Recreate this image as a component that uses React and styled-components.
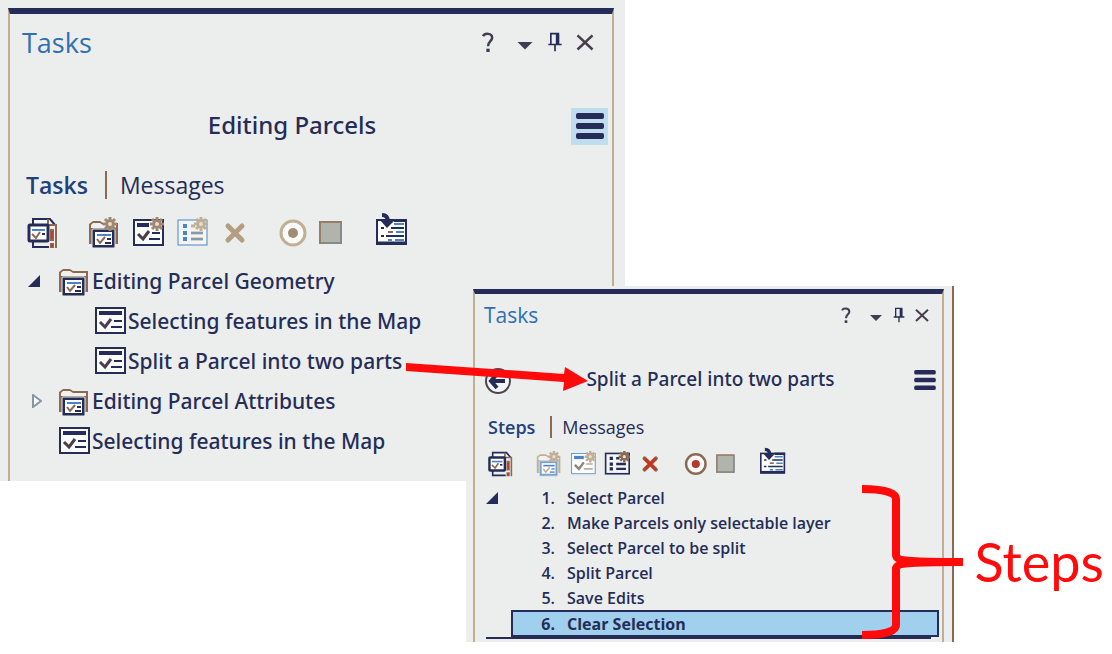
import React from "react";
import styled, { createGlobalStyle, css } from "styled-components";

const NAVY = "#252c57";
const BROWN = "#8a6a52";
const TAN = "#bfaf95";
const BLUE = "#4a86c5";
const SKY = "#a0d0ee";
const PANEL = "#ebeeed";
const RED = "#ff0b0b";

const GlobalStyle = createGlobalStyle`
  * { box-sizing: border-box; }
  body {
    margin: 0;
    background: #fff;
    color: ${NAVY};
    font-family: "Open Sans", "Noto Sans", sans-serif;
  }
  button {
    margin: 0;
    padding: 0;
    border: 0;
    background: none;
    color: inherit;
    font: inherit;
    cursor: pointer;
  }
  ul, ol, h1, h2 { margin: 0; padding: 0; font-weight: 400; list-style: none; }
  svg { display: block; flex: none; }
`;

const Stage = styled.main`
  display: grid;
  grid-template-columns: 466fr 159fr 329fr 158fr;
  grid-template-rows: 286px 195px auto;
`;

const Pane = styled.section`
  background: ${PANEL};
  ${(p) =>
    p.$compact
      ? css`
          grid-area: 2 / 2 / 4 / 4;
          padding: 3px 8px 0 7px;
          border-right: 2px solid ${BROWN};
        `
      : css`
          grid-area: 1 / 1 / 3 / 3;
          padding: 8px 11px 0 8px;
        `}
`;

const Frame = styled.div`
  height: 100%;
  border: 2px solid ${TAN};
  border-top: ${(p) => (p.$compact ? 5 : 6)}px solid ${NAVY};
  border-bottom: 0;
  padding-bottom: ${(p) => (p.$compact ? 3 : 19)}px;
`;

const TitleBar = styled.header`
  display: flex;
  align-items: center;
  justify-content: space-between;
  height: ${(p) => (p.$compact ? 42 : 56)}px;
  padding: ${(p) => (p.$compact ? "0 10px 0 9px" : "0 15px 0 12px")};
`;

const Title = styled.h1`
  color: #2f6fb2;
  font-size: ${(p) => (p.$compact ? 21 : 27)}px;
  line-height: 1;
`;

const WindowTools = styled.div`
  display: flex;
  gap: ${(p) => (p.$compact ? 3 : 6)}px;
`;

const WindowButton = styled.button`
  display: grid;
  place-items: center;
  width: ${(p) => (p.$compact ? 20 : 24)}px;
  height: 24px;
  &:first-child { margin-right: 7px; }
`;

const HeadingRow = styled.div`
  display: flex;
  align-items: center;
  height: ${(p) => (p.$compact ? 40 : 38)}px;
  margin-top: ${(p) => (p.$compact ? 24 : 37)}px;
  padding: ${(p) => (p.$compact ? "0 1px 0 9px" : "0 4px 0 3px")};
`;

const Heading = styled.h2`
  flex: 1;
  padding-bottom: 2px;
  text-align: center;
  font-family: "Noto Sans", "Open Sans", sans-serif;
  font-size: ${(p) => (p.$compact ? 19 : 24)}px;
  line-height: 1;
  font-weight: 500;
`;

const MenuButton = styled.button`
  display: grid;
  place-items: center;
  width: ${(p) => (p.$compact ? 32 : 37)}px;
  height: 37px;
  background: ${(p) => (p.$active ? "#bfddee" : "none")};
`;

const Tabs = styled.div`
  display: flex;
  align-items: center;
  height: 32px;
  margin-top: ${(p) => (p.$compact ? 11 : 24)}px;
  padding-left: ${(p) => (p.$compact ? 13 : 16)}px;
  font-size: ${(p) => (p.$compact ? 18 : 23)}px;
  line-height: 1;
`;

const Tab = styled.button`
  font-weight: ${(p) => (p.$active ? 600 : 400)};
  color: ${(p) => (p.$active ? "#22407a" : NAVY)};
  &:not(:first-child) {
    display: flex;
    align-items: center;
    height: ${(p) => (p.$compact ? 22 : 28)}px;
    margin-left: ${(p) => (p.$compact ? 15 : 17)}px;
    padding-left: ${(p) => (p.$compact ? 10 : 13)}px;
    border-left: 2px solid ${BROWN};
  }
`;

const Toolbar = styled.div`
  display: flex;
  gap: ${(p) => (p.$compact ? 18 : 24)}px;
  margin-top: ${(p) => (p.$compact ? 8 : 16)}px;
  padding-left: ${(p) => (p.$compact ? 12 : 16)}px;
`;

const ToolGroup = styled.div`
  display: flex;
  gap: ${(p) => p.$gap}px;
  &:first-child { margin-right: ${(p) => (p.$compact ? 5 : 6)}px; }
  &:last-child { margin-left: ${(p) => (p.$compact ? 4 : 6)}px; }
`;

const Tree = styled.ul`
  margin-top: 12px;
  padding-left: 16px;
  font-family: "Noto Sans", "Open Sans", sans-serif;
`;

const TreeRow = styled.li`
  display: flex;
  align-items: center;
  height: 40px;
  padding-left: ${(p) => (p.$nested ? 36 : 0)}px;
`;

const Toggle = styled.button`
  display: flex;
  width: 32px;
  padding-left: ${(p) => (p.$open ? 2 : 6)}px;
`;

const ToggleSpace = styled.span`
  width: 32px;
`;

const TreeItem = styled.button`
  display: flex;
  align-items: center;
  gap: 2px;
  font-size: 21px;
  line-height: 1;
  font-weight: 500;
  white-space: nowrap;
`;

const StepArea = styled.div`
  display: flex;
  align-items: flex-start;
  margin: 8px 11px 0;
  border-bottom: 2px solid ${NAVY};
`;

const StepToggle = styled.button`
  width: 25px;
  height: 25px;
`;

const StepList = styled.ol`
  flex: 1;
  margin-right: -8px;
`;

const Step = styled.li`
  display: flex;
  align-items: center;
  height: ${(p) => (p.$selected ? 27 : 25)}px;
  border: 2px solid ${(p) => (p.$selected ? NAVY : "transparent")};
  background: ${(p) => (p.$selected ? SKY : "none")};
  font-size: 16px;
  line-height: 1;
  font-weight: ${(p) => (p.$selected ? 700 : 600)};
`;

const StepNumber = styled.span`
  width: 42px;
  margin-right: 12px;
  text-align: right;
`;

const Arrow = styled.svg`
  grid-area: 2 / 1 / 3 / 3;
  z-index: 1;
  justify-self: end;
  margin: 76px 37px 0 0;
`;

const Callout = styled.aside`
  grid-area: 3 / 3 / 4 / 5;
  z-index: 1;
  place-self: end;
  display: flex;
  align-items: center;
  gap: 12px;
  margin: 0 8px 3px 0;
  color: ${RED};
  font-family: Lato, sans-serif;
  font-size: 54px;
  line-height: 1;
`;

const Gear = ({ color, x = 22, y = 7 }) => (
  <g transform={`translate(${x} ${y})`}>
    <g stroke={color} strokeWidth="3">
      <path d="M0-7V7M-7 0H7M-5-5L5 5M-5 5L5-5" />
    </g>
    <circle r="4.5" fill={color} />
    <circle r="2" fill="#e5ddcd" />
  </g>
);

const Icon = ({ size, children }) => (
  <svg width={size} height={size} viewBox="0 0 32 32" fill="none" aria-hidden="true">
    {children}
  </svg>
);

const PropertiesIcon = ({ size }) => (
  <Icon size={size}>
    <path d="M7 8V2H24L29 8" fill="#f6f7f7" stroke={NAVY} strokeWidth="2" />
    <path d="M7 23V30H23" stroke={NAVY} strokeWidth="2" />
    <path d="M22 2V8H30V31" stroke={BROWN} strokeWidth="2" />
    <rect x="3" y="8" width="19" height="16" rx="1" fill="#fff" stroke={NAVY} strokeWidth="3" />
    <path d="M6 13H19" stroke={BLUE} strokeWidth="2" />
    <path d="M6 17L10 21L14 15" stroke={BROWN} strokeWidth="2" />
    <path d="M16 17H19" stroke={NAVY} strokeWidth="2" />
    <path d="M26 12V24M26 26V31" stroke={BROWN} strokeWidth="4" />
    <path d="M26 14V22M26 27V30" stroke="#c23b28" strokeWidth="2" />
  </Icon>
);

const FolderIcon = ({ size, gear, faded }) => {
  const ink = faded ? "#7aa3cc" : NAVY;
  const edge = faded ? TAN : BROWN;
  return (
    <Icon size={size}>
      <path d="M1 27V7L5 4H12L15 6H30V27Z" fill={edge} />
      <path d="M3 8L5 6H12L15 8H28V11H3Z" fill="#f3f1ec" />
      <rect x="4" y="12" width="23" height="19" rx="1" fill={ink} stroke={PANEL} strokeWidth="1" />
      <rect x="7" y="15" width="17" height="13" fill="#fff" />
      <path d="M9 18H23" stroke={BLUE} strokeWidth="2" />
      <path d="M9 22L12 26L17 20" stroke={edge} strokeWidth="2" />
      <path d="M19 22H23M17 26H23" stroke={ink} strokeWidth="2" />
      {gear && <Gear color={faded ? TAN : "#a08770"} x={22} />}
    </Icon>
  );
};

const TaskIcon = ({ size, gear, faded }) => {
  const ink = faded ? BLUE : NAVY;
  const edge = faded ? TAN : BROWN;
  return (
    <Icon size={size}>
      <rect x="2" y="3" width="29" height="25" fill="#fafbfb" stroke={ink} strokeWidth={faded ? 1 : 2} />
      <path d={gear ? "M5 8H17" : "M5 8H28"} stroke={faded ? BLUE : ink} strokeWidth="4" />
      <path d="M6 17L11 22L17 14" stroke={faded ? "#8f8478" : "#4b3e4b"} strokeWidth="3" />
      <path d="M20 16H28M17 22H28" stroke={faded ? edge : ink} strokeWidth="2" />
      {gear && <Gear color={faded ? TAN : "#a08770"} x={25} />}
    </Icon>
  );
};

const StepsIcon = ({ size, faded }) => {
  const ink = faded ? BLUE : NAVY;
  const edge = faded ? TAN : BROWN;
  return (
    <Icon size={size}>
      <rect x="2" y="3" width="29" height="25" fill="#f3f5f5" stroke={ink} strokeWidth={faded ? 1 : 2} />
      <path d="M7 9H11M7 16H11M7 22H11" stroke={ink} strokeWidth="4" />
      <path d="M15 9H19M15 16H27M15 22H27" stroke={faded ? edge : ink} strokeWidth="3" />
      {faded && <path d="M15 16H27M15 22H27" stroke={BLUE} strokeWidth="1" />}
      <Gear color={edge} x={25} />
    </Icon>
  );
};

const DeleteIcon = ({ size, faded }) => (
  <Icon size={size}>
    <path d="M8 9L22 23M22 9L8 23" stroke={faded ? "#b39e84" : BROWN} strokeWidth="5" strokeLinecap="round" />
    {!faded && <path d="M8 9L22 23M22 9L8 23" stroke="#d52d1e" strokeWidth="3" />}
  </Icon>
);

const RecordIcon = ({ size, faded }) => (
  <Icon size={size}>
    <circle cx="17" cy="16" r="12" fill="#f9faf9" stroke={faded ? TAN : BROWN} strokeWidth="3" />
    <circle cx="17" cy="16" r="5" fill={faded ? "#a08d76" : "#b23a2a"} />
  </Icon>
);

const StopIcon = ({ size }) => (
  <Icon size={size}>
    <rect x="6" y="5" width="21" height="21" fill="#b1b3ad" stroke="#937e68" strokeWidth="2" />
    <path d="M27 6V26H7" stroke="#7695b4" strokeWidth="1" />
  </Icon>
);

const ImportIcon = ({ size }) => (
  <Icon size={size}>
    <rect x="1" y="3" width="29" height="24" fill="#fff" stroke={NAVY} strokeWidth="2" />
    <path d="M1 26H30" stroke={NAVY} strokeWidth="3" />
    <path d="M18 2H31V5H18Z" fill={NAVY} />
    <path d="M18 7H28M20 15H28M12 23H16M19 23H28" stroke={BLUE} strokeWidth="2" />
    <path d="M5 11H8M15 11H28M5 19H8M10 19H28" stroke={NAVY} strokeWidth="2" />
    <path d="M12 15H17" stroke={BROWN} strokeWidth="2" />
    <path d="M6-2C10-2 12 0 12 5" stroke={NAVY} strokeWidth="4" />
    <path d="M4 3L11 11L18 4Z" fill={NAVY} />
  </Icon>
);

const ImportButton = styled.button`
  svg { overflow: visible; }
`;

const HelpGlyph = ({ size }) => (
  <svg width={size} height={size} viewBox="0 0 24 24" fill="none" aria-hidden="true">
    <path d="M6 5C8 1 17 1 17 7C17 11 12 11 12 17" stroke="#443d4c" strokeWidth="3" />
    <path d="M10 20H14V24H10Z" fill="#443d4c" />
  </svg>
);

const CaretGlyph = ({ size }) => (
  <svg width={size} height={size} viewBox="0 0 24 24" aria-hidden="true">
    <path d="M3 12H21L12 21Z" fill="#3f3d50" />
  </svg>
);

const PinGlyph = ({ size }) => (
  <svg width={size} height={size} viewBox="0 0 24 24" fill="none" aria-hidden="true">
    <path d="M7 15V2H16V15M4 15H20M12 15V23" stroke={NAVY} strokeWidth="2" />
    <path d="M15 2V15" stroke={NAVY} strokeWidth="4" />
  </svg>
);

const CloseGlyph = ({ size }) => (
  <svg width={size} height={size} viewBox="0 0 24 24" fill="none" aria-hidden="true">
    <path d="M3 4L21 21M21 4L3 21" stroke="#473e4b" strokeWidth="3" />
  </svg>
);

const MenuGlyph = ({ width, height }) => (
  <svg width={width} height={height} viewBox="0 0 28 26" aria-hidden="true">
    <rect width="28" height="6" rx="2" fill={NAVY} />
    <rect y="10" width="28" height="6" rx="2" fill={NAVY} />
    <rect y="20" width="28" height="6" rx="2" fill={NAVY} />
  </svg>
);

const BackGlyph = () => (
  <svg width="28" height="28" viewBox="0 0 28 28" fill="none" aria-hidden="true">
    <circle cx="14" cy="15" r="12" fill="#f4f6f5" stroke="#4c434e" strokeWidth="2" />
    <path d="M7 15H21M13 8L7 15L13 22" stroke={NAVY} strokeWidth="4" />
  </svg>
);

const OpenTriangle = () => (
  <svg width="12" height="12" viewBox="0 0 12 12" aria-hidden="true">
    <path d="M12 0V12H0Z" fill={NAVY} />
  </svg>
);

const ClosedTriangle = () => (
  <svg width="10" height="14" viewBox="0 0 10 14" aria-hidden="true">
    <path d="M1 1L9 7L1 13Z" fill="#fff" stroke="#8296a8" strokeWidth="2" />
  </svg>
);

function WindowHeader({ compact }) {
  const size = compact ? 16 : 20;
  return (
    <TitleBar $compact={compact}>
      <Title $compact={compact}>Tasks</Title>
      <WindowTools $compact={compact}>
        <WindowButton $compact={compact} aria-label="Help"><HelpGlyph size={size} /></WindowButton>
        <WindowButton $compact={compact} aria-label="Options"><CaretGlyph size={size} /></WindowButton>
        <WindowButton $compact={compact} aria-label="Auto hide"><PinGlyph size={size} /></WindowButton>
        <WindowButton $compact={compact} aria-label="Close"><CloseGlyph size={size} /></WindowButton>
      </WindowTools>
    </TitleBar>
  );
}

function TaskToolbar({ compact }) {
  const size = compact ? 26 : 32;
  return (
    <Toolbar $compact={compact} role="toolbar">
      <ToolGroup $compact={compact}>
        <button aria-label="Properties"><PropertiesIcon size={size} /></button>
      </ToolGroup>
      <ToolGroup $compact={compact} $gap={compact ? 8 : 12}>
        <button aria-label="New group"><FolderIcon size={size} gear faded={compact} /></button>
        <button aria-label="New task"><TaskIcon size={size} gear faded={compact} /></button>
        <button aria-label="New step"><StepsIcon size={size} faded={!compact} /></button>
        <button aria-label="Delete"><DeleteIcon size={size} faded={!compact} /></button>
      </ToolGroup>
      <ToolGroup $compact={compact} $gap={compact ? 4 : 6}>
        <button aria-label="Record"><RecordIcon size={size} faded={!compact} /></button>
        <button aria-label="Stop"><StopIcon size={size} /></button>
      </ToolGroup>
      <ToolGroup $compact={compact}>
        <ImportButton aria-label="Import"><ImportIcon size={size} /></ImportButton>
      </ToolGroup>
    </Toolbar>
  );
}

const treeRows = [
  { label: "Editing Parcel Geometry", folder: true, open: true },
  { label: "Selecting features in the Map", nested: true },
  { label: "Split a Parcel into two parts", nested: true },
  { label: "Editing Parcel Attributes", folder: true, open: false },
  { label: "Selecting features in the Map" },
];

const steps = [
  "Select Parcel",
  "Make Parcels only selectable layer",
  "Select Parcel to be split",
  "Split Parcel",
  "Save Edits",
  "Clear Selection",
];

export default function App() {
  return (
    <>
      <GlobalStyle />
      <Stage>
        <Pane>
          <Frame>
            <WindowHeader />
            <HeadingRow>
              <Heading>Editing Parcels</Heading>
              <MenuButton $active aria-label="Menu"><MenuGlyph width={28} height={26} /></MenuButton>
            </HeadingRow>
            <Tabs>
              <Tab $active>Tasks</Tab>
              <Tab>Messages</Tab>
            </Tabs>
            <TaskToolbar />
            <Tree>
              {treeRows.map((row, i) => (
                <TreeRow key={i} $nested={row.nested}>
                  {row.folder ? (
                    <Toggle $open={row.open} aria-label="Toggle group" aria-expanded={row.open}>
                      {row.open ? <OpenTriangle /> : <ClosedTriangle />}
                    </Toggle>
                  ) : (
                    <ToggleSpace />
                  )}
                  <TreeItem>
                    {row.folder ? <FolderIcon size={32} /> : <TaskIcon size={32} />}
                    {row.label}
                  </TreeItem>
                </TreeRow>
              ))}
            </Tree>
          </Frame>
        </Pane>

        <Pane $compact>
          <Frame $compact>
            <WindowHeader compact />
            <HeadingRow $compact>
              <button aria-label="Back"><BackGlyph /></button>
              <Heading $compact>Split a Parcel into two parts</Heading>
              <MenuButton $compact aria-label="Menu"><MenuGlyph width={22} height={20} /></MenuButton>
            </HeadingRow>
            <Tabs $compact>
              <Tab $compact $active>Steps</Tab>
              <Tab $compact>Messages</Tab>
            </Tabs>
            <TaskToolbar compact />
            <StepArea>
              <StepToggle aria-label="Toggle steps" aria-expanded="true"><OpenTriangle /></StepToggle>
              <StepList>
                {steps.map((label, i) => (
                  <Step key={label} $selected={i === steps.length - 1}>
                    <StepNumber>{i + 1}.</StepNumber>
                    {label}
                  </Step>
                ))}
              </StepList>
            </StepArea>
          </Frame>
        </Pane>

        <Arrow width="182" height="32" viewBox="0 0 182 32" aria-hidden="true">
          <path d="M0 1L158 12L159 5L182 19L157 29L158 20L0 9Z" fill={RED} />
        </Arrow>

        <Callout>
          <svg width="101" height="154" viewBox="0 0 101 154" fill="none" stroke={RED} aria-hidden="true">
            <path d="M0 4C20 4 34 7 34 14V70C34 77 52 77 101 77" strokeWidth="8" />
            <path d="M0 150C20 150 34 147 34 140V84C34 77 52 77 101 77" strokeWidth="8" />
          </svg>
          Steps
        </Callout>
      </Stage>
    </>
  );
}
